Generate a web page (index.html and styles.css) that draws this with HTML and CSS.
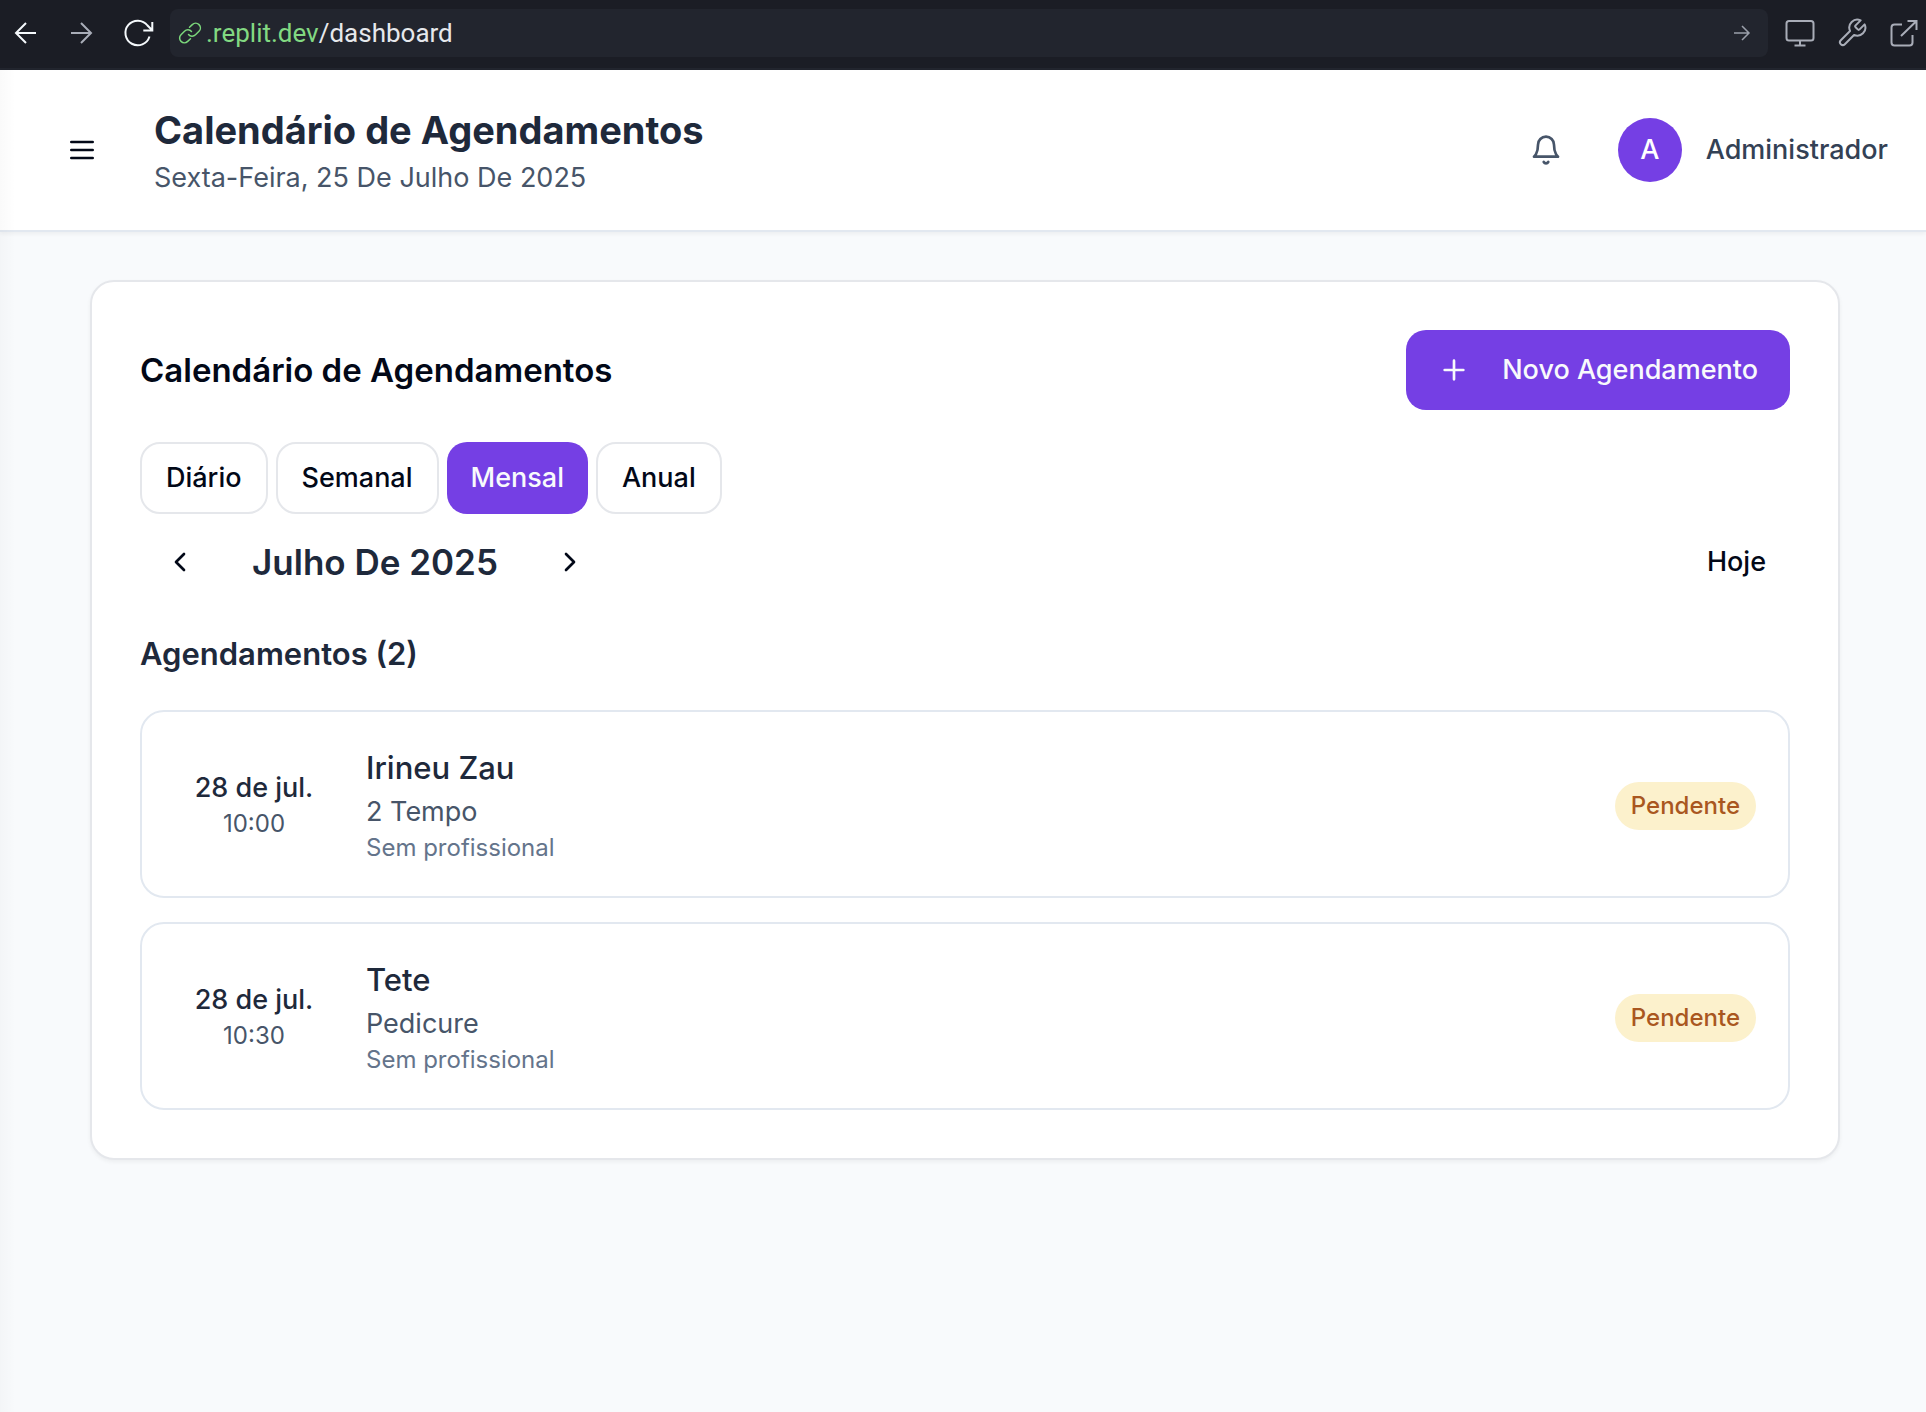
FILE: index.html
```html
<!DOCTYPE html>
<html lang="pt-BR">
<head>
<meta charset="utf-8">
<meta name="viewport" content="width=device-width, initial-scale=1">
<title>Calendário de Agendamentos</title>
<link rel="stylesheet" href="styles.css">
</head>
<body>
<nav class="browser" aria-label="Navegador">
  <div class="browser-nav">
    <button class="tool bright" type="button" aria-label="Voltar"><svg class="icon thin" viewBox="0 0 32 32"><path d="M26 16H6M16 6 6 16l10 10"/></svg></button>
    <button class="tool" type="button" aria-label="Avançar"><svg class="icon thin" viewBox="0 0 32 32"><path d="M5 16h20M15 6l10 10-10 10"/></svg></button>
    <button class="tool bright" type="button" aria-label="Recarregar"><svg class="icon thin" viewBox="0 0 32 32"><path d="M27.500 19.500A12.300 12.300 0 1 1 25.500 8.500L30 13M30.300 5v8.500h-9"/></svg></button>
  </div>
  <div class="address">
    <svg class="icon link-icon" viewBox="0 0 24 24"><path d="M10.500 13.500a4.800 4.800 0 0 0 7 .3l3.500-3.500a4.700 4.700 0 0 0-6.700-6.700l-2.800 2.700M13.500 10.500a4.800 4.800 0 0 0-7-.3L3 13.700a4.700 4.700 0 0 0 6.700 6.700l2.800-2.700"/></svg>
    <a class="url" href="#"><span class="host">.replit.dev</span>/dashboard</a>
    <button class="go" type="button" aria-label="Ir"><svg class="icon thin" viewBox="0 0 24 24"><path d="M4 12h15M12 5l7 7-7 7"/></svg></button>
  </div>
  <div class="browser-tools">
    <button class="tool" type="button" aria-label="Dispositivo"><svg class="icon thin" viewBox="0 0 32 32"><rect x="2.500" y="4" width="27" height="19.500" rx="2.500"/><path d="M16 23.500v5M10.500 28.500h11"/></svg></button>
    <button class="tool" type="button" aria-label="Ferramentas"><svg class="icon" viewBox="0 0 24 24"><path stroke-width="1.500" d="M14.700 6.300a1 1 0 0 0 0 1.400l1.600 1.600a1 1 0 0 0 1.400 0l3.770-3.770a6 6 0 0 1-7.940 7.940l-6.910 6.910a2.120 2.120 0 0 1-3-3l6.910-6.910a6 6 0 0 1 7.940-7.940l-3.760 3.760z"/></svg></button>
    <button class="tool" type="button" aria-label="Abrir em nova aba"><svg class="icon thin" viewBox="0 0 32 32"><path d="M14 7.500H6.500a3 3 0 0 0-3 3v15a3 3 0 0 0 3 3h15a3 3 0 0 0 3-3V18M13 19 28.500 4M19.500 4h9v9"/></svg></button>
  </div>
</nav>

<div class="app">
  <header class="topbar">
    <button class="menu" type="button" aria-label="Menu"><svg class="icon" viewBox="0 0 24 24"><path d="M4 6h16M4 12h16M4 18h16"/></svg></button>
    <div class="heading">
      <h1>Calendário de Agendamentos</h1>
      <p>Sexta-Feira, 25 De Julho De 2025</p>
    </div>
    <button class="bell" type="button" aria-label="Notificações"><svg class="icon" viewBox="0 0 24 24"><path d="M6 8a6 6 0 0 1 12 0c0 7 3 9 3 9H3s3-2 3-9M10.300 21a1.940 1.940 0 0 0 3.400 0"/></svg></button>
    <div class="user"><span class="avatar">A</span><span>Administrador</span></div>
  </header>

  <main>
    <section class="panel">
      <div class="panel-head">
        <h2>Calendário de Agendamentos</h2>
        <button class="primary" type="button"><svg class="icon" viewBox="0 0 24 24"><path d="M5 12h14M12 5v14"/></svg>Novo Agendamento</button>
      </div>
      <div class="views">
        <button class="view" type="button">Diário</button>
        <button class="view" type="button">Semanal</button>
        <button class="view active" type="button" aria-pressed="true">Mensal</button>
        <button class="view" type="button">Anual</button>
      </div>
      <div class="period">
        <button class="ghost" type="button" aria-label="Mês anterior"><svg class="icon" viewBox="0 0 24 24"><path d="m15 18-6-6 6-6"/></svg></button>
        <h3>Julho De 2025</h3>
        <button class="ghost" type="button" aria-label="Próximo mês"><svg class="icon" viewBox="0 0 24 24"><path d="m9 18 6-6-6-6"/></svg></button>
        <button class="ghost today" type="button">Hoje</button>
      </div>
      <h4>Agendamentos (2)</h4>
      <ul class="bookings">
        <li class="booking">
          <div class="when"><p class="date">28 de jul.</p><p class="time">10:00</p></div>
          <div class="what"><p class="client">Irineu Zau</p><p class="service">2 Tempo</p><p class="staff">Sem profissional</p></div>
          <span class="badge">Pendente</span>
        </li>
        <li class="booking">
          <div class="when"><p class="date">28 de jul.</p><p class="time">10:30</p></div>
          <div class="what"><p class="client">Tete</p><p class="service">Pedicure</p><p class="staff">Sem profissional</p></div>
          <span class="badge">Pendente</span>
        </li>
      </ul>
    </section>
  </main>
</div>
</body>
</html>
```

FILE: styles.css
```css
* { box-sizing: border-box; }

body {
  margin: 0;
  min-height: 100vh;
  display: flex;
  flex-direction: column;
  background: #f8fafc;
  color: #020817;
  font-family: Inter, "Liberation Sans", sans-serif;
  font-size: 27px;
  line-height: 40px;
}

h1, h2, h3, h4, p, ul { margin: 0; padding: 0; }
ul { list-style: none; }

button {
  display: inline-flex;
  align-items: center;
  justify-content: center;
  padding: 0;
  border: 0;
  background: none;
  color: inherit;
  font: inherit;
  font-weight: 500;
}

.icon {
  width: 32px;
  height: 32px;
  flex: none;
  fill: none;
  stroke: currentColor;
  stroke-width: 2;
  stroke-linecap: round;
  stroke-linejoin: round;
}
.icon.thin { stroke-linecap: butt; stroke-linejoin: miter; }

/* Browser bar */
.browser {
  display: flex;
  align-items: center;
  gap: 16px;
  height: 70px;
  padding: 0 6px 2px 10px;
  border-bottom: 2px solid #22252e;
  background: #1b1d25;
}
.browser-nav { display: flex; gap: 24px; }
.browser-tools { display: flex; gap: 20px; }
.tool { color: #a9adb8; }
.tool.bright { color: #f5f9fc; }
.address {
  flex: 1;
  display: flex;
  align-items: center;
  gap: 4px;
  height: 48px;
  padding: 0 14px 0 8px;
  border-radius: 8px;
  background: #22252e;
}
.icon.link-icon { width: 24px; height: 24px; stroke-width: 1.5; color: #7bd77b; }
.url {
  flex: 1;
  color: #e6e8ec;
  font-family: Roboto, "Liberation Sans", sans-serif;
  font-size: 26px;
  line-height: 32px;
  text-decoration: none;
}
.host { color: #82d982; }
.go { color: #9ba0ab; }
.go .icon { width: 24px; height: 24px; stroke-width: 1.5; }

/* Page */
.app { position: relative; flex: 1; }
.app::before {
  content: "";
  position: absolute;
  inset: 0 auto 0 0;
  width: 16px;
  background: linear-gradient(to right, rgba(0, 0, 0, 0.02), transparent);
  pointer-events: none;
}

.topbar {
  display: flex;
  align-items: center;
  padding: 32px 38px 32px 42px;
  border-bottom: 2px solid #e2e8f0;
  background: #fff;
  box-shadow: 0 2px 4px rgba(0, 0, 0, 0.05);
}
.menu, .bell { width: 80px; height: 80px; }
.menu { margin-right: 32px; color: #020817; }
.bell { margin-right: 32px; color: #475569; }
.heading { flex: 1; }
h1 { color: #1e293b; font-size: 38px; font-weight: 700; line-height: 56px; }
.heading p { color: #475569; }
.user {
  display: flex;
  align-items: center;
  gap: 24px;
  color: #334155;
  font-weight: 500;
}
.avatar {
  width: 64px;
  height: 64px;
  border-radius: 50%;
  background: #753fe4;
  color: #fff;
  line-height: 64px;
  text-align: center;
}

main { padding: 48px 86px 48px 90px; }
.panel {
  padding: 48px;
  border: 2px solid #e5e7eb;
  border-radius: 24px;
  background: #fff;
  box-shadow: 0 2px 4px rgba(0, 0, 0, 0.05);
}
.panel-head {
  display: flex;
  align-items: center;
  justify-content: space-between;
  margin-bottom: 32px;
}
h2 { font-size: 33px; font-weight: 600; line-height: 48px; }
.primary {
  gap: 32px;
  height: 80px;
  padding: 0 32px;
  border-radius: 20px;
  background: #753fe4;
  color: #f8fafc;
}
.views { display: flex; gap: 8px; margin-bottom: 12px; }
.view {
  height: 72px;
  padding: 0 24px;
  border: 2px solid #e5e7eb;
  border-radius: 20px;
}
.view.active { border: 0; background: #753fe4; color: #f8fafc; }
.period { display: flex; align-items: center; margin-bottom: 32px; }
.ghost { height: 72px; padding: 0 24px; }
.today { margin-left: auto; }
h3 { margin: 0 32px; color: #1e293b; font-size: 35px; font-weight: 600; line-height: 56px; }
h4 { margin-bottom: 32px; color: #1e293b; font-size: 31px; font-weight: 600; line-height: 48px; }

.bookings { display: flex; flex-direction: column; gap: 24px; }
.booking {
  display: flex;
  align-items: center;
  gap: 32px;
  padding: 32px;
  border: 2px solid #e2e8f0;
  border-radius: 24px;
}
.when { width: 160px; text-align: center; }
.what { flex: 1; }
.date { color: #1e293b; font-weight: 500; }
.time { color: #475569; font-size: 24px; line-height: 32px; }
.client { color: #1e293b; font-size: 31px; font-weight: 500; line-height: 48px; }
.service { color: #475569; }
.staff { color: #64748b; font-size: 24px; line-height: 32px; }
.badge {
  margin-top: 4px;
  padding: 8px 16px;
  border-radius: 24px;
  background: #fcf1cc;
  color: #a9571f;
  font-size: 24px;
  font-weight: 500;
  line-height: 32px;
}
```
